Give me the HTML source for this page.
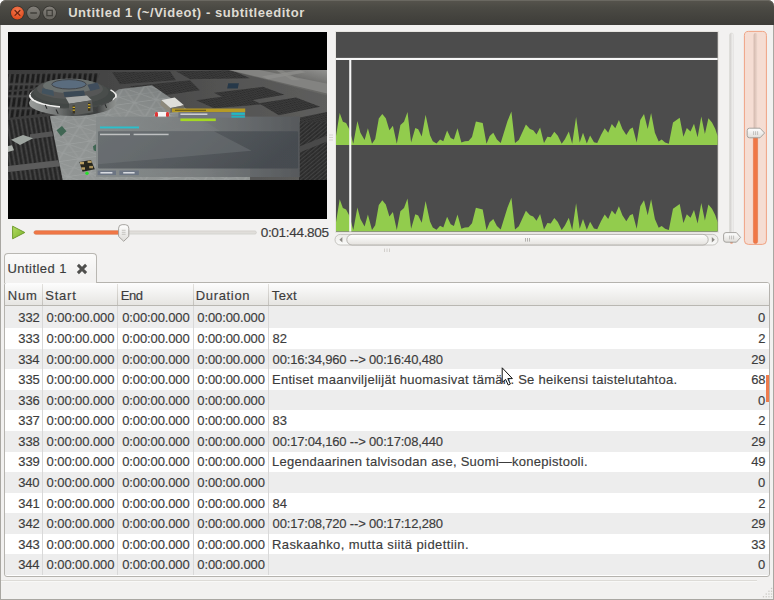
<!DOCTYPE html>
<html><head><meta charset="utf-8"><title>subtitleeditor</title>
<style>
html,body{margin:0;padding:0;}
body{width:774px;height:600px;overflow:hidden;background:#f2f1f0;font-family:"Liberation Sans",sans-serif;position:relative;}
#win{position:absolute;left:0;top:0;width:774px;height:600px;overflow:hidden;background:#f2f1f0;}
.abs{position:absolute;}
.t{position:absolute;font-size:13px;line-height:16px;color:#3c3c3c;white-space:nowrap;-webkit-text-stroke:0.16px #3c3c3c;}
.row{position:absolute;left:5px;width:763.5px;}
.vsep{position:absolute;width:1px;background:#d9d9d9;top:306px;height:269px;}
.hsep{position:absolute;width:1px;top:284px;height:21px;background:linear-gradient(#e3e1dd,#c4c2bd);}
</style></head><body>
<div id="win">

<!-- title bar -->
<div class="abs" style="left:0;top:0;width:774px;height:25px;background:#fff;"></div>
<div class="abs" style="left:0;top:0;width:774px;height:25px;border-radius:6px 6px 0 0;background:linear-gradient(#56544d 0%,#4b4a44 30%,#3d3c38 100%);box-shadow:inset 0 1px 0 #6a6861;"></div>
<svg class="abs" style="left:0;top:0" width="70" height="25" viewBox="0 0 70 25">
 <defs>
  <radialGradient id="gc" cx="50%" cy="30%" r="70%"><stop offset="0" stop-color="#f37a52"/><stop offset="1" stop-color="#df4a1b"/></radialGradient>
  <linearGradient id="gg" x1="0" y1="0" x2="0" y2="1"><stop offset="0" stop-color="#827f79"/><stop offset="1" stop-color="#66645e"/></linearGradient>
 </defs>
 <circle cx="17.4" cy="13" r="7.2" fill="#35342f"/>
 <circle cx="17.4" cy="13" r="6.4" fill="url(#gc)"/>
 <path d="M15 10.5 L19.9 15.4 M19.9 10.5 L15 15.4" stroke="#6a2611" stroke-width="1.25" stroke-linecap="round"/>
 <circle cx="33.5" cy="13" r="7.2" fill="#35342f"/>
 <circle cx="33.5" cy="13" r="6.4" fill="url(#gg)"/>
 <path d="M30.8 13.1 H36.4" stroke="#403f3a" stroke-width="1.5" stroke-linecap="round"/>
 <circle cx="49.6" cy="13" r="7.2" fill="#35342f"/>
 <circle cx="49.6" cy="13" r="6.4" fill="url(#gg)"/>
 <rect x="46.9" y="10.3" width="5.4" height="5.4" fill="none" stroke="#403f3a" stroke-width="1.25"/>
</svg>
<span id="title" class="abs" style="left:68.19px;top:4px;font-size:13px;line-height:18px;font-weight:bold;color:#dfdbd2;white-space:nowrap;letter-spacing:0.541px;">Untitled 1 (~/Videot) - subtitleeditor</span>

<!-- window edge -->
<div class="abs" style="left:0;top:25px;width:1px;height:575px;background:#a9a7a2;"></div>
<div class="abs" style="left:773px;top:25px;width:1px;height:575px;background:#a9a7a2;"></div>
<div class="abs" style="left:0;top:599px;width:774px;height:1px;background:#a9a7a2;"></div>

<!-- video -->
<div class="abs" style="left:8px;top:32px;width:318.5px;height:186.6px;background:#000;"></div>


<svg class="abs" style="left:8px;top:69.7px" width="318.5" height="110" viewBox="8 69.7 318.5 110">
 <defs>
  <filter id="b1" x="-5%" y="-5%" width="110%" height="110%"><feGaussianBlur stdDeviation="0.6"/></filter>
  <filter id="b2" x="-5%" y="-5%" width="110%" height="110%"><feGaussianBlur stdDeviation="0.6"/></filter>
  <linearGradient id="bgA" x1="0" y1="0" x2="1" y2="0"><stop offset="0" stop-color="#3a3a3a"/><stop offset="0.45" stop-color="#4a4a4a"/><stop offset="0.75" stop-color="#565655"/><stop offset="1" stop-color="#5e5e5d"/></linearGradient>
  <linearGradient id="topR" x1="0" y1="1" x2="1" y2="0"><stop offset="0" stop-color="#5c5c5a"/><stop offset="0.65" stop-color="#6a6a68"/><stop offset="1" stop-color="#989896"/></linearGradient>
  <pattern id="grL" width="5.2" height="12" patternUnits="userSpaceOnUse" patternTransform="skewX(-8)"><rect width="5.2" height="12" fill="#444444"/><rect x="0.6" y="1.2" width="3.2" height="9.6" fill="#1f1f1f"/></pattern>
  <pattern id="grL2" width="4.6" height="40" patternUnits="userSpaceOnUse" patternTransform="skewX(10)"><rect width="4.6" height="40" fill="#464646"/><rect x="0.5" y="0" width="2.8" height="40" fill="#262626"/></pattern>
  <pattern id="grR" width="2.2" height="2.2" patternUnits="userSpaceOnUse" patternTransform="rotate(-14) skewX(35)"><rect width="2.2" height="2.2" fill="#3f3f3f"/><rect x="0.4" y="0.4" width="1.5" height="1.5" fill="#2a2a2a"/></pattern>
  <pattern id="tri" width="22" height="16" patternUnits="userSpaceOnUse" patternTransform="rotate(-8) skewX(28)"><path d="M0 0 H22 M0 8 H22 M0 0 L22 16 M22 0 L0 16 M11 0 V16" stroke="#b4b8b6" stroke-width="0.9" fill="none" opacity="0.3"/></pattern>
  <pattern id="dg" width="3" height="3" patternUnits="userSpaceOnUse" patternTransform="rotate(-40)"><rect width="3" height="3" fill="#2c2c2c"/><rect width="3" height="1.1" fill="#424242"/></pattern>
  <linearGradient id="plat" x1="0.2" y1="1" x2="0.6" y2="0"><stop offset="0" stop-color="#939796"/><stop offset="0.7" stop-color="#8b8f8e"/><stop offset="1" stop-color="#7c8080"/></linearGradient>
  <linearGradient id="dlg" x1="0" y1="0" x2="1" y2="0"><stop offset="0" stop-color="#868b8b"/><stop offset="0.5" stop-color="#787c7d"/><stop offset="0.78" stop-color="#64686b"/><stop offset="1" stop-color="#56595c"/></linearGradient>
  <linearGradient id="dlgin" x1="0" y1="0" x2="1" y2="0.25"><stop offset="0" stop-color="#5f6467"/><stop offset="0.5" stop-color="#54595d"/><stop offset="1" stop-color="#454a4f"/></linearGradient>
  <linearGradient id="rim" x1="0" y1="0" x2="1" y2="0"><stop offset="0" stop-color="#9a9d9b"/><stop offset="0.3" stop-color="#787b7a"/><stop offset="0.5" stop-color="#4a4d4c"/><stop offset="0.78" stop-color="#3c3e3e"/><stop offset="0.93" stop-color="#7e817f"/><stop offset="1" stop-color="#8e918f"/></linearGradient>
 </defs>
 <g filter="url(#b1)">
  <rect x="6" y="68" width="324" height="114" fill="url(#bgA)"/>
  <!-- left gratings -->
  <polygon points="6,74 100,72 96,84 6,90" fill="url(#grL)"/>
  <polygon points="6,92 60,88 54,112 6,118" fill="url(#grL)"/>
  <polygon points="6,120 50,116 58,160 6,166" fill="url(#grL2)"/>
  <polygon points="6,172 60,166 63,181 6,181" fill="url(#grL2)"/>
  <polygon points="6,166 58,160 60,166 6,172" fill="#5c5c5c"/>
  <polygon points="30,134 52,131 53,136 30,139" fill="#555555"/>
  <!-- top middle gratings -->
  <polygon points="112,72 170,71 176,80 120,84" fill="url(#grR)"/>
  <polygon points="130,86 190,80 200,90 150,97" fill="url(#grR)"/>
  <polygon points="176,71 232,70 250,78 190,79" fill="url(#grR)"/>
  <polygon points="196,100 240,94 262,104 214,108" fill="url(#grR)"/>
  <!-- top-right light area -->
  <polygon points="222,68 330,68 330,96 " fill="url(#topR)"/>
  <polygon points="256,69 330,84 330,94 226,69" fill="#838381"/>
  <polygon points="262,76 300,70 306,72 268,79" fill="#8f8f8c" opacity="0.8"/>
  <polygon points="276,70 282,70 300,80 292,80" fill="#8f8f8c" opacity="0.6"/>
  <!-- right gratings -->
  <polygon points="214,92.5 263,86.5 284.5,94.4 234.5,103" fill="url(#grR)"/>
  <polygon points="258.8,103 296,97.3 320.3,106.5 278.8,115" fill="url(#grR)"/>
  <polygon points="300,117.3 330,111 330,130 300,130" fill="url(#grR)"/>
  <rect x="227.4" y="83" width="10.6" height="5.2" fill="#26384a" transform="skewX(-12) translate(18.5 0)"/>
  <!-- right of dialog -->
  <rect x="299" y="122" width="32" height="60" fill="url(#dg)"/>
  <polygon points="300,146 330,134 330,140 300,152" fill="#4a4a4a"/>
  <!-- platform -->
  <polygon points="50,116 84,112 119,89 152,85 200,118 250,150 250,181 63,181" fill="url(#plat)"/>
  <polygon points="50,116 84,112 119,89 152,85 200,118 250,150 250,181 63,181" fill="url(#tri)"/>
  <!-- misc objects -->
  <polygon points="11,139.5 23,134.6 33,138 20,144.8" fill="#9ea5a0"/>
  <polygon points="7,146 12,145 14,150 7,152" fill="#a9aea9"/>
  <polygon points="56.5,130 62,125.6 66.5,131 61,136" fill="#3f6653"/>
  <polygon points="93,146 96,144 96,151 93.6,150" fill="#3f6653"/>
 </g>
 <!-- saucer -->
 <g filter="url(#b2)">
  <ellipse cx="72.5" cy="102.6" rx="43.6" ry="13" fill="url(#rim)"/>
  <ellipse cx="72.5" cy="95.4" rx="43.6" ry="12.6" fill="#f0f0ee"/>
  <path d="M60 108 A43.6 12.6 0 0 0 112.5 100.4 L113.5 91 L60 96 Z" fill="#454847"/>
  <ellipse cx="73.1" cy="94.3" rx="42.6" ry="12.2" fill="#434645"/>
  <path d="M110.5 89.6 A43.6 12.6 0 0 1 115.6 97.6" stroke="#ecece9" stroke-width="1.6" fill="none"/>
  <ellipse cx="71" cy="91.6" rx="37.6" ry="12" fill="#4a4d4c"/>
  <ellipse cx="70" cy="88.6" rx="33" ry="10" fill="#545756"/>
  <ellipse cx="69.5" cy="85.4" rx="26.5" ry="7.3" fill="#6b6f6e"/>
  <ellipse cx="69" cy="84" rx="17.2" ry="4.7" fill="#5a6c7e" stroke="#3d4144" stroke-width="0.9"/>
  <polygon points="42.4,88 53.4,90.2 54,95.6 41.8,93" fill="#42525f"/>
  <polygon points="63.4,91.6 84,90.2 85,95.4 64.6,96.8" fill="#3b4855"/>
  <polygon points="87.4,84.4 97.4,82.2 100,88.2 90.4,90.8" fill="#3f4e5b"/>
  <!-- docking port -->
  <polygon points="65.6,97.1 86.9,95.3 91.9,100 69.1,103.5" fill="#a7a9a7"/>
  <polygon points="69.1,103.5 91.9,100 93.3,112 74.8,114.9 69,109.2" fill="#5a5c5a"/>
  <rect x="72.6" y="105.2" width="2.4" height="8" fill="#3a3524"/><rect x="72.6" y="106.4" width="2.4" height="1.3" fill="#c9a92c"/><rect x="72.6" y="109.2" width="2.4" height="1.3" fill="#c9a92c"/>
  <rect x="88" y="102.6" width="2.4" height="8" fill="#3a3524"/><rect x="88" y="103.8" width="2.4" height="1.3" fill="#c9a92c"/><rect x="88" y="106.6" width="2.4" height="1.3" fill="#c9a92c"/>
  <path d="M56 109.2 L58.2 113.4 M45.2 104.6 L47 108.4 M105 104 L106.6 107.6" stroke="#2c2e2e" stroke-width="1.1"/>
 </g>
 <g filter="url(#b2)">
  <!-- container box + ring -->
  <ellipse cx="162" cy="118" rx="10.6" ry="5" fill="#999c9c"/>
  <polygon points="161.3,99.6 170.5,107.8 170.2,112.4 160.4,104.6" fill="#8d897b"/>
  <polygon points="161.3,99.6 174.8,97.1 184,105 170.5,107.8" fill="#dededa"/>
  <polygon points="170.5,107.8 184,105 184,108.4 170.2,112.4" fill="#6c6a62"/>
  <rect x="154.8" y="111.6" width="14.4" height="5.8" rx="2.4" fill="#f4f4f4"/>
  <rect x="155" y="111.8" width="3" height="5.4" rx="1.4" fill="#e03434"/>
  <rect x="166" y="111.8" width="3" height="5.4" rx="1.4" fill="#e03434"/>
  <!-- vehicle -->
  <polygon points="79.4,161.6 91,159.8 94.8,169 82.6,171.4" fill="#26261f"/>
  <rect x="80" y="161.6" width="4" height="2.4" fill="#b89f62"/><rect x="87.6" y="160.4" width="4" height="2.2" fill="#b89f62"/>
  <rect x="81.4" y="167" width="3.6" height="2.4" fill="#b89f62"/><rect x="89.2" y="165.6" width="3.8" height="2.4" fill="#a89058"/>
  <circle cx="87" cy="173" r="1.7" fill="#27e02a"/>
  <!-- dialog -->
  <rect x="96" y="116.3" width="203.8" height="60.4" fill="url(#dlg)" opacity="0.93"/>
  <rect x="98" y="131" width="200.2" height="37.2" rx="1.2" fill="url(#dlgin)" opacity="0.95"/>
  <polygon points="98,131 214,131 251.5,150.5 98,164" fill="#777c7f" opacity="0.4"/>
  <rect x="100" y="126.2" width="39" height="1.9" fill="#2ac0cc"/>
  <rect x="100" y="133.4" width="30" height="1.5" fill="#d4d6d6" opacity="0.8"/><rect x="133.6" y="133.4" width="35" height="1.5" fill="#d4d6d6" opacity="0.8"/>
  <rect x="97.6" y="170.2" width="18.4" height="4.6" fill="#6c7483"/><rect x="100.4" y="171.8" width="12" height="1.4" fill="#e4e6ea"/>
  <rect x="119.4" y="170.2" width="19.4" height="4.6" fill="#6c7483"/><rect x="123.2" y="171.8" width="11.4" height="1.4" fill="#e4e6ea"/>
  <!-- tooltip -->
  <rect x="172" y="108.2" width="73.2" height="3.7" fill="#b59a28"/>
  <rect x="175" y="109.4" width="31" height="1.3" fill="#6e5f1c"/>
  <rect x="178.4" y="111.9" width="66.8" height="5.6" fill="#70747e"/>
  <rect x="180.4" y="113.2" width="27" height="1.4" fill="#d9dadd"/>
  <rect x="231.4" y="112.3" width="13.4" height="2.3" fill="#22b8c4"/><rect x="231.4" y="115.4" width="13.4" height="2" fill="#22b0bc"/>
  <rect x="180.4" y="118.2" width="35.4" height="2.6" fill="#a4d824"/>
 </g>
</svg>

<!-- play + seek -->
<svg class="abs" style="left:0;top:220px" width="340" height="26" viewBox="0 220 340 26">
 <defs>
  <linearGradient id="pg" x1="0" y1="0" x2="1" y2="1"><stop offset="0" stop-color="#b5dc63"/><stop offset="1" stop-color="#77b227"/></linearGradient>
  <linearGradient id="hg" x1="0" y1="0" x2="0" y2="1"><stop offset="0" stop-color="#ffffff"/><stop offset="1" stop-color="#dddbd7"/></linearGradient>
 </defs>
 <path d="M12.6 226.2 L24.8 232.5 L12.6 238.8 Z" fill="url(#pg)" stroke="#6f9b2d" stroke-width="1" stroke-linejoin="round"/>
 <rect x="34" y="230.9" width="222.4" height="3.2" rx="1.6" fill="#e0deda" stroke="#c9c7c2" stroke-width="0.6"/>
 <rect x="34" y="230.7" width="89" height="3.6" rx="1.8" fill="#f07746" stroke="#dd6c3d" stroke-width="0.5"/>
 <path d="M118.6 228.2 Q118.6 224.7 122.1 224.7 H125.3 Q128.8 224.7 128.8 228.2 V236.4 L123.7 241.3 L118.6 236.4 Z" fill="url(#hg)" stroke="#9d9b96" stroke-width="0.9"/>
 <path d="M121.8 230.3 H125.6 M121.8 232.3 H125.6 M121.8 234.3 H125.6" stroke="#b3b1ac" stroke-width="0.7"/>
</svg>
<span id="time" class="t" style="left:260.68px;top:225.1px;font-size:13.6px;letter-spacing:-0.337px;">0:01:44.805</span>

<!-- pane grips -->
<svg class="abs" style="left:326px;top:130px" width="10" height="20" viewBox="0 0 10 20"><path d="M3 5 H7 M3 7.5 H7 M3 10 H7" stroke="#cfcdc8" stroke-width="0.8"/></svg>
<svg class="abs" style="left:380px;top:246px" width="14" height="8" viewBox="0 0 14 8"><path d="M4.5 2.5 V6 M7 2.5 V6 M9.5 2.5 V6" stroke="#c9c7c2" stroke-width="0.8"/></svg>

<!-- waveform -->
<div class="abs" style="left:334.5px;top:30.5px;width:384.5px;height:202.5px;background:#e6e4e0;"></div>
<svg class="abs" style="left:330px;top:28px" width="392" height="206" viewBox="330 28 392 206">
 <rect x="336" y="32" width="381.7" height="199.6" fill="#4c4c4c"/>
 <polygon points="336.0,145.0 336.0,136.0 339.7,113.0 342.9,121.8 346.1,123.1 349.4,129.5 353.3,143.8 357.4,121.1 360.4,132.8 364.6,140.1 367.9,128.3 372.0,143.8 375.2,138.9 378.8,118.6 382.3,114.0 385.8,118.3 389.4,130.2 392.9,125.7 396.8,143.8 400.4,125.0 404.0,121.8 407.5,112.1 411.1,142.5 415.3,128.0 418.2,129.3 421.7,136.4 425.6,114.7 430.0,135.2 432.8,141.2 436.5,143.5 440.1,139.5 443.3,141.2 447.1,130.5 450.7,137.9 453.9,139.6 457.5,128.3 461.4,142.5 464.9,141.2 468.5,140.9 472.0,137.0 475.9,121.4 482.7,123.1 486.5,143.8 489.7,136.0 493.3,132.8 496.9,139.6 500.7,143.1 507.5,121.1 511.4,111.5 515.0,143.1 518.8,139.9 525.9,124.4 530.0,128.9 533.2,130.2 536.5,134.5 540.1,127.6 544.0,143.1 547.4,136.7 550.7,137.3 554.3,131.7 557.8,135.7 561.7,143.8 564.9,139.2 568.8,131.5 572.2,143.8 576.1,116.9 579.7,142.5 583.0,132.8 586.8,143.5 590.1,135.4 594.0,142.2 597.2,142.9 601.1,134.7 604.7,128.3 608.2,132.8 611.8,124.1 615.3,128.3 618.9,119.9 622.4,128.9 626.3,135.0 630.0,128.9 632.8,127.6 636.7,142.5 640.3,119.9 644.0,114.0 647.7,128.9 651.1,113.0 654.9,132.8 658.7,141.4 661.7,139.6 665.1,142.5 668.8,143.8 673.0,122.4 679.7,117.7 683.4,136.7 686.8,128.0 690.5,131.5 694.0,123.7 697.6,137.3 701.3,116.6 704.9,134.1 708.4,118.3 712.0,122.4 715.3,128.9 717.6,136.0 717.6,145.0" fill="#92cc4d"/>
 <polygon points="336.0,231.3 336.0,222.3 339.7,199.3 342.9,208.1 346.1,209.4 349.4,215.8 353.3,230.1 357.4,207.4 360.4,219.1 364.6,226.4 367.9,214.6 372.0,230.1 375.2,225.2 378.8,204.9 382.3,200.3 385.8,204.6 389.4,216.5 392.9,212.0 396.8,230.1 400.4,211.3 404.0,208.1 407.5,198.4 411.1,228.8 415.3,214.3 418.2,215.6 421.7,222.7 425.6,201.0 430.0,221.5 432.8,227.5 436.5,229.8 440.1,225.8 443.3,227.5 447.1,216.8 450.7,224.2 453.9,225.9 457.5,214.6 461.4,228.8 464.9,227.5 468.5,227.2 472.0,223.3 475.9,207.7 482.7,209.4 486.5,230.1 489.7,222.3 493.3,219.1 496.9,225.9 500.7,229.4 507.5,207.4 511.4,197.8 515.0,229.4 518.8,226.2 525.9,210.7 530.0,215.2 533.2,216.5 536.5,220.8 540.1,213.9 544.0,229.4 547.4,223.0 550.7,223.6 554.3,218.0 557.8,222.0 561.7,230.1 564.9,225.5 568.8,217.8 572.2,230.1 576.1,203.2 579.7,228.8 583.0,219.1 586.8,229.8 590.1,221.7 594.0,228.5 597.2,229.2 601.1,221.0 604.7,214.6 608.2,219.1 611.8,210.4 615.3,214.6 618.9,206.2 622.4,215.2 626.3,221.3 630.0,215.2 632.8,213.9 636.7,228.8 640.3,206.2 644.0,200.3 647.7,215.2 651.1,199.3 654.9,219.1 658.7,227.7 661.7,225.9 665.1,228.8 668.8,230.1 673.0,208.7 679.7,204.0 683.4,223.0 686.8,214.3 690.5,217.8 694.0,210.0 697.6,223.6 701.3,202.9 704.9,220.4 708.4,204.6 712.0,208.7 715.3,215.2 717.6,222.3 717.6,231.3" fill="#92cc4d"/>
 <rect x="336" y="57.9" width="381.7" height="2.1" fill="#f6f6f6"/>
 <rect x="349.2" y="58" width="2.1" height="173.6" fill="#f6f6f6"/>
</svg>

<!-- h scrollbar -->
<svg class="abs" style="left:330px;top:232px" width="392" height="16" viewBox="330 232 392 16">
 <defs><linearGradient id="sg" x1="0" y1="0" x2="0" y2="1"><stop offset="0" stop-color="#ffffff"/><stop offset="1" stop-color="#e4e2de"/></linearGradient>
 <linearGradient id="tg" x1="0" y1="0" x2="0" y2="1"><stop offset="0" stop-color="#ecebe8"/><stop offset="1" stop-color="#fafaf9"/></linearGradient></defs>
 <rect x="335" y="234.4" width="383" height="10.6" rx="5.3" fill="url(#tg)" stroke="#b9b7b2" stroke-width="0.8"/>
 <rect x="346.8" y="234.4" width="361.4" height="10.6" rx="5.3" fill="url(#sg)" stroke="#a9a7a2" stroke-width="0.8"/>
 <path d="M342.4 237 L339.4 239.7 L342.4 242.4 Z" fill="#8d8b86"/>
 <path d="M711.8 237 L714.8 239.7 L711.8 242.4 Z" fill="#8d8b86"/>
 <path d="M525.5 238 V241.6 M527.5 238 V241.6 M529.5 238 V241.6" stroke="#9a9893" stroke-width="0.7"/>
</svg>

<!-- vertical sliders -->
<svg class="abs" style="left:720px;top:28px" width="54" height="222" viewBox="720 28 54 222">
 <defs>
  <linearGradient id="vt" x1="0" y1="0" x2="1" y2="0"><stop offset="0" stop-color="#cfcdc9"/><stop offset="1" stop-color="#f7f6f5"/></linearGradient>
  <linearGradient id="vt2" x1="0" y1="0" x2="1" y2="0"><stop offset="0" stop-color="#d2b8ad"/><stop offset="1" stop-color="#efd9cf"/></linearGradient>
  <linearGradient id="kh" x1="0" y1="0" x2="0" y2="1"><stop offset="0" stop-color="#ffffff"/><stop offset="1" stop-color="#dfddd9"/></linearGradient>
 </defs>
 <rect x="729.6" y="33" width="3.8" height="206" rx="1.9" fill="url(#vt)" stroke="#d6d4d0" stroke-width="0.5"/>
 <rect x="730.2" y="240" width="2.6" height="3.6" rx="1.2" fill="#ee7b4c"/>
 <path d="M726 232.6 H736.4 L740.6 237.4 L736.4 242.2 H726 Q723.6 242.2 723.6 239.8 V235 Q723.6 232.6 726 232.6 Z" fill="url(#kh)" stroke="#9d9b96" stroke-width="0.9"/>
 <path d="M729.6 235.6 V239.4 M731.6 235.6 V239.4 M733.6 235.6 V239.4" stroke="#aeaca7" stroke-width="0.7"/>

 <rect x="744.4" y="31.4" width="22" height="213" rx="4" fill="#f5ddd3" stroke="#f0a383" stroke-width="1"/>
 <rect x="753.6" y="33" width="3.8" height="100" rx="1.9" fill="url(#vt2)"/>
 <rect x="753.4" y="132" width="4.2" height="111.6" rx="2.1" fill="#f07746" stroke="#de6a3b" stroke-width="0.5"/>
 <path d="M749.6 128.2 H760 L764.6 133 L760 137.8 H749.6 Q747.2 137.8 747.2 135.4 V130.6 Q747.2 128.2 749.6 128.2 Z" fill="url(#kh)" stroke="#9d9b96" stroke-width="0.9"/>
 <path d="M753.6 131.2 V135 M755.6 131.2 V135 M757.6 131.2 V135" stroke="#aeaca7" stroke-width="0.7"/>
</svg>


<!-- tree view -->
<div class="abs" style="left:4px;top:281.9px;width:765.7px;height:294.7px;box-sizing:border-box;border:1px solid #b5b3ae;border-radius:3px;background:#fff;"></div>
<div class="abs" style="left:4px;top:253px;width:92.8px;height:30.2px;border:1px solid #b9b7b2;border-bottom:none;border-radius:4px 4px 0 0;background:linear-gradient(#fbfbfa,#f2f1f0 70%);box-sizing:border-box;"></div>
<span id="tab" class="t" style="left:7.49px;top:261.4px;letter-spacing:0.447px;">Untitled 1</span>
<svg class="abs" style="left:75px;top:261.7px" width="14" height="14" viewBox="0 0 14 14"><path d="M2.9 2.9 L11.1 11.1 M11.1 2.9 L2.9 11.1" stroke="#4f4f4d" stroke-width="2.9" stroke-linecap="butt"/></svg>
<div class="abs" style="left:5px;top:283px;width:763.7px;height:22px;background:linear-gradient(#fdfdfd,#e6e5e2);border-bottom:1px solid #b9b7b2;border-radius:2px 2px 0 0;"></div>
<div class="hsep" style="left:42px"></div><div class="hsep" style="left:117.4px"></div><div class="hsep" style="left:192.8px"></div><div class="hsep" style="left:268px"></div>
<span id="hnum" class="t" style="left:7.68px;top:288.0px;letter-spacing:0.821px;">Num</span>
<span id="hstart" class="t" style="left:45.29px;top:288.0px;letter-spacing:0.777px;">Start</span>
<span id="hend" class="t" style="left:120.78px;top:288.0px;letter-spacing:-0.493px;">End</span>
<span id="hdur" class="t" style="left:195.68px;top:288.0px;letter-spacing:0.673px;">Duration</span>
<span id="htext" class="t" style="left:271.80px;top:288.0px;letter-spacing:0.339px;">Text</span>
<div class="row" style="top:306.00px;height:22.09px;background:#ededed"></div>
<span id="n0" class="t" style="top:310.42px;left:18.34px;letter-spacing:-0.150px;">332</span>
<span id="s0" class="t" style="top:310.42px;left:46.59px;letter-spacing:-0.075px;">0:00:00.000</span>
<span id="e0" class="t" style="top:310.42px;left:122.19px;letter-spacing:-0.115px;">0:00:00.000</span>
<span id="d0" class="t" style="top:310.42px;left:197.29px;letter-spacing:-0.105px;">0:00:00.000</span>
<span id="c0" class="t" style="top:310.42px;left:758.09px;letter-spacing:-0.150px;">0</span>
<div class="row" style="top:328.04px;height:20.63px;background:#ffffff"></div>
<span id="n1" class="t" style="top:331.00px;left:18.34px;letter-spacing:-0.150px;">333</span>
<span id="s1" class="t" style="top:331.00px;left:46.59px;letter-spacing:-0.075px;">0:00:00.000</span>
<span id="e1" class="t" style="top:331.00px;left:122.19px;letter-spacing:-0.115px;">0:00:00.000</span>
<span id="d1" class="t" style="top:331.00px;left:197.29px;letter-spacing:-0.105px;">0:00:00.000</span>
<span id="t1" class="t" style="top:331.00px;left:272.59px;letter-spacing:-0.150px;">82</span>
<span id="c1" class="t" style="top:331.00px;left:758.30px;letter-spacing:-0.150px;">2</span>
<div class="row" style="top:348.62px;height:20.63px;background:#ededed"></div>
<span id="n2" class="t" style="top:351.58px;left:18.13px;letter-spacing:-0.150px;">334</span>
<span id="s2" class="t" style="top:351.58px;left:46.59px;letter-spacing:-0.075px;">0:00:00.000</span>
<span id="e2" class="t" style="top:351.58px;left:122.19px;letter-spacing:-0.115px;">0:00:00.000</span>
<span id="d2" class="t" style="top:351.58px;left:197.29px;letter-spacing:-0.105px;">0:00:00.000</span>
<span id="t2" class="t" style="top:351.58px;left:272.59px;letter-spacing:-0.173px;">00:16:34,960 --&gt; 00:16:40,480</span>
<span id="c2" class="t" style="top:351.58px;left:751.22px;letter-spacing:-0.150px;">29</span>
<div class="row" style="top:369.20px;height:20.63px;background:#ffffff"></div>
<span id="n3" class="t" style="top:372.16px;left:18.34px;letter-spacing:-0.150px;">335</span>
<span id="s3" class="t" style="top:372.16px;left:46.59px;letter-spacing:-0.075px;">0:00:00.000</span>
<span id="e3" class="t" style="top:372.16px;left:122.19px;letter-spacing:-0.115px;">0:00:00.000</span>
<span id="d3" class="t" style="top:372.16px;left:197.29px;letter-spacing:-0.105px;">0:00:00.000</span>
<span id="t3" class="t" style="top:372.16px;left:271.98px;letter-spacing:0.277px;">Entiset maanviljelijät huomasivat tämän. Se heikensi taistelutahtoa.</span>
<span id="c3" class="t" style="top:372.16px;left:751.22px;letter-spacing:-0.150px;">68</span>
<div class="row" style="top:389.78px;height:20.63px;background:#ededed"></div>
<span id="n4" class="t" style="top:392.74px;left:18.34px;letter-spacing:-0.150px;">336</span>
<span id="s4" class="t" style="top:392.74px;left:46.59px;letter-spacing:-0.075px;">0:00:00.000</span>
<span id="e4" class="t" style="top:392.74px;left:122.19px;letter-spacing:-0.115px;">0:00:00.000</span>
<span id="d4" class="t" style="top:392.74px;left:197.29px;letter-spacing:-0.105px;">0:00:00.000</span>
<span id="c4" class="t" style="top:392.74px;left:758.09px;letter-spacing:-0.150px;">0</span>
<div class="row" style="top:410.36px;height:20.63px;background:#ffffff"></div>
<span id="n5" class="t" style="top:413.32px;left:18.34px;letter-spacing:-0.150px;">337</span>
<span id="s5" class="t" style="top:413.32px;left:46.59px;letter-spacing:-0.075px;">0:00:00.000</span>
<span id="e5" class="t" style="top:413.32px;left:122.19px;letter-spacing:-0.115px;">0:00:00.000</span>
<span id="d5" class="t" style="top:413.32px;left:197.29px;letter-spacing:-0.105px;">0:00:00.000</span>
<span id="t5" class="t" style="top:413.32px;left:272.59px;letter-spacing:-0.150px;">83</span>
<span id="c5" class="t" style="top:413.32px;left:758.30px;letter-spacing:-0.150px;">2</span>
<div class="row" style="top:430.94px;height:20.63px;background:#ededed"></div>
<span id="n6" class="t" style="top:433.90px;left:18.34px;letter-spacing:-0.150px;">338</span>
<span id="s6" class="t" style="top:433.90px;left:46.59px;letter-spacing:-0.075px;">0:00:00.000</span>
<span id="e6" class="t" style="top:433.90px;left:122.19px;letter-spacing:-0.115px;">0:00:00.000</span>
<span id="d6" class="t" style="top:433.90px;left:197.29px;letter-spacing:-0.105px;">0:00:00.000</span>
<span id="t6" class="t" style="top:433.90px;left:272.59px;letter-spacing:-0.173px;">00:17:04,160 --&gt; 00:17:08,440</span>
<span id="c6" class="t" style="top:433.90px;left:751.22px;letter-spacing:-0.150px;">29</span>
<div class="row" style="top:451.52px;height:20.63px;background:#ffffff"></div>
<span id="n7" class="t" style="top:454.48px;left:18.34px;letter-spacing:-0.150px;">339</span>
<span id="s7" class="t" style="top:454.48px;left:46.59px;letter-spacing:-0.075px;">0:00:00.000</span>
<span id="e7" class="t" style="top:454.48px;left:122.19px;letter-spacing:-0.115px;">0:00:00.000</span>
<span id="d7" class="t" style="top:454.48px;left:197.29px;letter-spacing:-0.105px;">0:00:00.000</span>
<span id="t7" class="t" style="top:454.48px;left:271.98px;letter-spacing:0.266px;">Legendaarinen talvisodan ase, Suomi—konepistooli.</span>
<span id="c7" class="t" style="top:454.48px;left:751.22px;letter-spacing:-0.150px;">49</span>
<div class="row" style="top:472.10px;height:20.63px;background:#ededed"></div>
<span id="n8" class="t" style="top:475.06px;left:18.13px;letter-spacing:-0.150px;">340</span>
<span id="s8" class="t" style="top:475.06px;left:46.59px;letter-spacing:-0.075px;">0:00:00.000</span>
<span id="e8" class="t" style="top:475.06px;left:122.19px;letter-spacing:-0.115px;">0:00:00.000</span>
<span id="d8" class="t" style="top:475.06px;left:197.29px;letter-spacing:-0.105px;">0:00:00.000</span>
<span id="c8" class="t" style="top:475.06px;left:758.09px;letter-spacing:-0.150px;">0</span>
<div class="row" style="top:492.68px;height:20.63px;background:#ffffff"></div>
<span id="n9" class="t" style="top:495.64px;left:18.34px;letter-spacing:-0.150px;">341</span>
<span id="s9" class="t" style="top:495.64px;left:46.59px;letter-spacing:-0.075px;">0:00:00.000</span>
<span id="e9" class="t" style="top:495.64px;left:122.19px;letter-spacing:-0.115px;">0:00:00.000</span>
<span id="d9" class="t" style="top:495.64px;left:197.29px;letter-spacing:-0.105px;">0:00:00.000</span>
<span id="t9" class="t" style="top:495.64px;left:272.59px;letter-spacing:-0.150px;">84</span>
<span id="c9" class="t" style="top:495.64px;left:758.30px;letter-spacing:-0.150px;">2</span>
<div class="row" style="top:513.26px;height:20.63px;background:#ededed"></div>
<span id="n10" class="t" style="top:516.22px;left:18.34px;letter-spacing:-0.150px;">342</span>
<span id="s10" class="t" style="top:516.22px;left:46.59px;letter-spacing:-0.075px;">0:00:00.000</span>
<span id="e10" class="t" style="top:516.22px;left:122.19px;letter-spacing:-0.115px;">0:00:00.000</span>
<span id="d10" class="t" style="top:516.22px;left:197.29px;letter-spacing:-0.105px;">0:00:00.000</span>
<span id="t10" class="t" style="top:516.22px;left:272.59px;letter-spacing:-0.173px;">00:17:08,720 --&gt; 00:17:12,280</span>
<span id="c10" class="t" style="top:516.22px;left:751.22px;letter-spacing:-0.150px;">29</span>
<div class="row" style="top:533.84px;height:20.63px;background:#ffffff"></div>
<span id="n11" class="t" style="top:536.80px;left:18.34px;letter-spacing:-0.150px;">343</span>
<span id="s11" class="t" style="top:536.80px;left:46.59px;letter-spacing:-0.075px;">0:00:00.000</span>
<span id="e11" class="t" style="top:536.80px;left:122.19px;letter-spacing:-0.115px;">0:00:00.000</span>
<span id="d11" class="t" style="top:536.80px;left:197.29px;letter-spacing:-0.105px;">0:00:00.000</span>
<span id="t11" class="t" style="top:536.80px;left:271.98px;letter-spacing:0.408px;">Raskaahko, mutta siitä pidettiin.</span>
<span id="c11" class="t" style="top:536.80px;left:751.22px;letter-spacing:-0.150px;">33</span>
<div class="row" style="top:554.42px;height:20.63px;background:#ededed"></div>
<span id="n12" class="t" style="top:557.38px;left:18.13px;letter-spacing:-0.150px;">344</span>
<span id="s12" class="t" style="top:557.38px;left:46.59px;letter-spacing:-0.075px;">0:00:00.000</span>
<span id="e12" class="t" style="top:557.38px;left:122.19px;letter-spacing:-0.115px;">0:00:00.000</span>
<span id="d12" class="t" style="top:557.38px;left:197.29px;letter-spacing:-0.105px;">0:00:00.000</span>
<span id="c12" class="t" style="top:557.38px;left:758.09px;letter-spacing:-0.150px;">0</span>
<div class="vsep" style="left:42px"></div><div class="vsep" style="left:117.4px"></div><div class="vsep" style="left:192.8px"></div><div class="vsep" style="left:268px"></div>
<!-- overlay scrollbar thumb -->
<div class="abs" style="left:766px;top:375px;width:2.6px;height:27px;background:#ee7b4c;"></div>

<!-- cursor -->
<svg class="abs" style="left:498px;top:364px" width="20" height="26" viewBox="498 364 20 26"><path d="M502.2 367.8 V382.4 L505.6 379.4 L508.2 385 L510.4 384 L507.8 378.6 L512.4 378.6 Z" fill="#fff" stroke="#111" stroke-width="1" stroke-linejoin="round"/></svg>

<!-- status bar -->
<div class="abs" style="left:1px;top:580px;width:756px;height:1px;background:#dddbd7;"></div>
<div class="abs" style="left:1px;top:581px;width:756px;height:1px;background:#f8f8f7;"></div>
<svg class="abs" style="left:756px;top:584px" width="18" height="16" viewBox="0 0 18 16" fill="#cbc9c4"><rect x="14.9" y="3.8" width="1.3" height="1.3"/><rect x="12.3" y="6.6" width="1.3" height="1.3"/><rect x="14.9" y="6.6" width="1.3" height="1.3"/><rect x="9.6" y="9.4" width="1.3" height="1.3"/><rect x="12.3" y="9.4" width="1.3" height="1.3"/><rect x="14.9" y="9.4" width="1.3" height="1.3"/><rect x="6.8" y="12.1" width="1.3" height="1.3"/><rect x="9.6" y="12.1" width="1.3" height="1.3"/><rect x="12.3" y="12.1" width="1.3" height="1.3"/><rect x="14.9" y="12.1" width="1.3" height="1.3"/></svg>
</div>
</body></html>
